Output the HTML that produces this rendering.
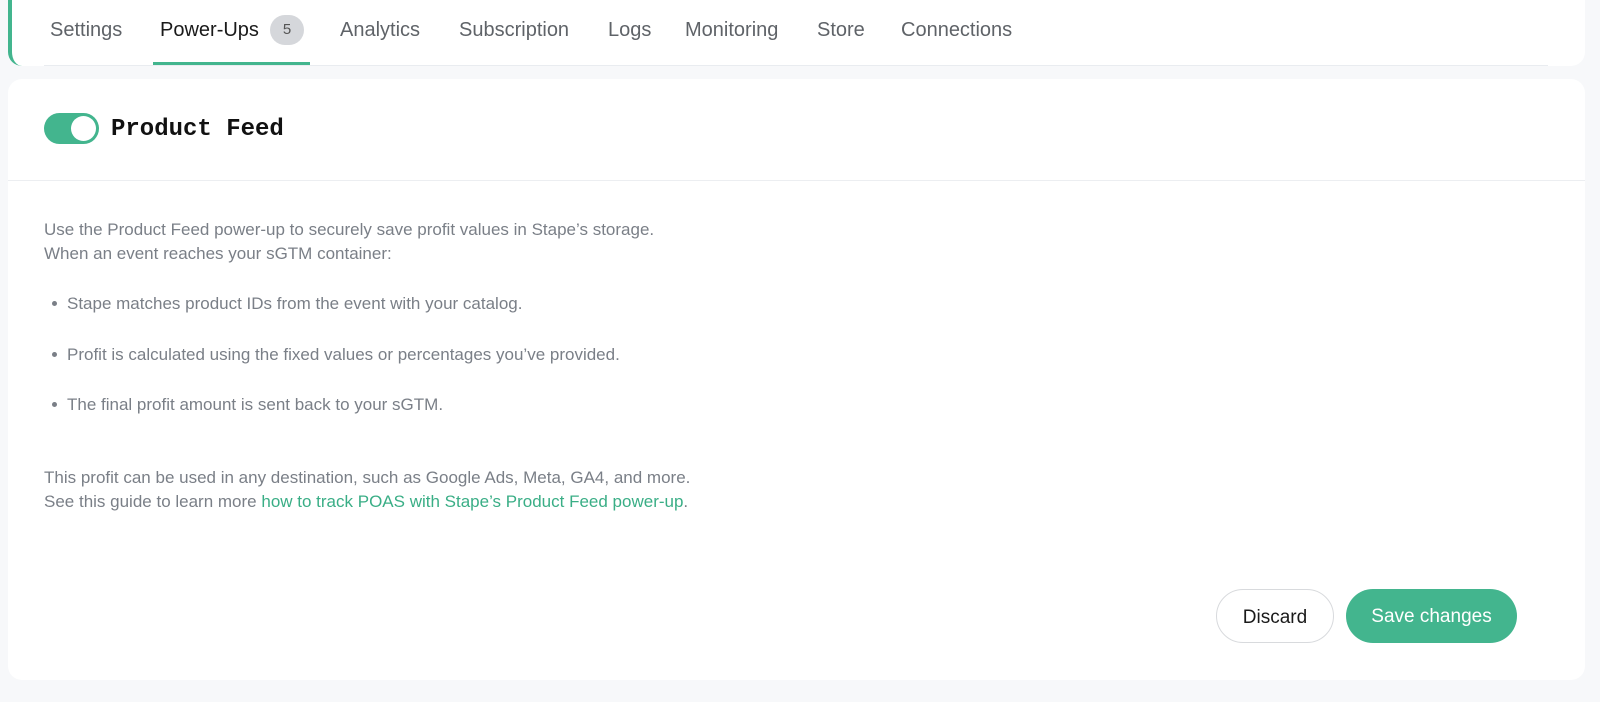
<!DOCTYPE html>
<html><head><meta charset="utf-8"><style>
body{margin:0;width:1600px;height:702px;background:#f7f8fa;font-family:"Liberation Sans",sans-serif;position:relative;overflow:hidden}
.top{position:absolute;left:8px;top:-20px;width:1577px;height:86px;background:#fff;border-radius:0 0 14px 14px;border-left:4px solid #43b58e;box-sizing:border-box}
.line{position:absolute;left:44px;top:65px;width:1504px;height:1px;background:#e9ecf0}
.tab{position:absolute;top:19px;font-size:20px;color:#5f6368;white-space:nowrap}
.act{color:#1a1a1a}
.badge{position:absolute;left:270px;top:15px;width:34px;height:30px;border-radius:15px;background:#d5d7db;color:#555;font-size:15px;text-align:center;line-height:30px}
.ul{position:absolute;left:153px;top:62px;width:157px;height:3px;background:#43b58e}
.card{position:absolute;left:8px;top:79px;width:1577px;height:601px;background:#fff;border-radius:14px}
.div{position:absolute;left:0;top:101px;width:100%;height:1px;background:#eceef1}
.tog{position:absolute;left:36px;top:34px;width:55px;height:31px;border-radius:16px;background:#43b58e}
.tog i{position:absolute;right:3px;top:3px;width:25px;height:25px;border-radius:50%;background:#fff}
h1{position:absolute;left:103px;top:35px;margin:0;font:bold 24px/31px "Liberation Mono",monospace;color:#111}
.t{position:absolute;left:36px;font-size:17px;color:#7a7f87;line-height:24px;white-space:nowrap}
.t a{color:#3aae86;text-decoration:none}
.dot{display:inline-block;width:5px;height:5px;border-radius:50%;background:#7a7f87;vertical-align:middle;margin:0 10px 3px 8px}
.btn{position:absolute;top:510px;height:54px;border-radius:27px;font-size:19px;line-height:55px;text-align:center;box-sizing:border-box}
</style></head><body>
<div class="top"></div>
<div class="line"></div>
<div class="tab" style="left:50px">Settings</div>
<div class="tab act" style="left:160px">Power-Ups</div>
<div class="badge">5</div>
<div class="ul"></div>
<div class="tab" style="left:340px">Analytics</div>
<div class="tab" style="left:459px">Subscription</div>
<div class="tab" style="left:608px">Logs</div>
<div class="tab" style="left:685px">Monitoring</div>
<div class="tab" style="left:817px">Store</div>
<div class="tab" style="left:901px">Connections</div>
<div class="card">
<div class="tog"><i></i></div>
<h1>Product Feed</h1>
<div class="div"></div>
<div class="t" style="top:139px">Use the Product Feed power-up to securely save profit values in Stape’s storage.<br>When an event reaches your sGTM container:</div>
<div class="t" style="top:213px"><span class="dot"></span>Stape matches product IDs from the event with your catalog.</div>
<div class="t" style="top:264px"><span class="dot"></span>Profit is calculated using the fixed values or percentages you’ve provided.</div>
<div class="t" style="top:314px"><span class="dot"></span>The final profit amount is sent back to your sGTM.</div>
<div class="t" style="top:387px">This profit can be used in any destination, such as Google Ads, Meta, GA4, and more.<br>See this guide to learn more <a>how to track POAS with Stape’s Product Feed power-up</a>.</div>
<div class="btn" style="left:1208px;width:118px;border:1px solid #d8dadd;color:#1a1a1a">Discard</div>
<div class="btn" style="left:1338px;width:171px;background:#43b58e;color:#fff">Save changes</div>
</div>
</body></html>
